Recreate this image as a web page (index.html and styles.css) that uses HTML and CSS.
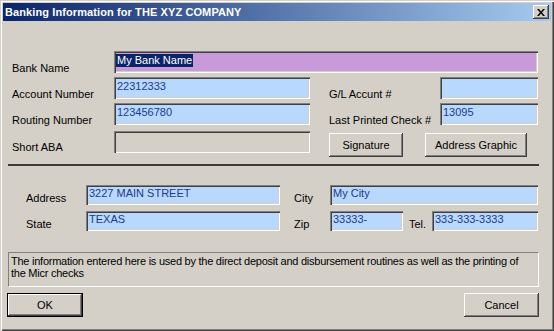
FILE: index.html
```html
<!DOCTYPE html>
<html lang="en">
<head>
  <meta charset="UTF-8" />
  <title>Banking Information</title>
  <link rel="stylesheet" href="styles.css">
</head>
<body>

  <div class="window">
    <div class="titlebar">
      <span class="title">Banking Information for THE XYZ COMPANY</span>
      <button class="close" title="Close">
        <svg width="8" height="7" viewBox="0 0 8 7"><path d="M0 0h2l2 2.5L6 0h2L5 3.5 8 7H6L4 4.5 2 7H0l3-3.5z" fill="#000"/></svg>
      </button>
    </div>

    <div class="content">
      <div class="bank-grid">
        <label class="lbl">Bank Name</label>
        <div class="field field-purple span-all"><span class="selected">My Bank Name</span></div>

        <label class="lbl">Account Number</label>
        <div class="field">22312333</div>
        <label class="lbl lbl-right">G/L Accunt #</label>
        <div class="field"></div>

        <label class="lbl">Routing Number</label>
        <div class="field">123456780</div>
        <label class="lbl lbl-right">Last Printed Check #</label>
        <div class="field">13095</div>

        <label class="lbl">Short ABA</label>
        <div class="field field-gray aba"></div>
        <div class="graphic-buttons">
          <button class="btn btn-sig">Signature</button>
          <button class="btn btn-addr">Address Graphic</button>
        </div>
      </div>

      <div class="separator"></div>

      <div class="address-grid">
        <label class="lbl">Address</label>
        <div class="field">3227 MAIN STREET</div>
        <label class="lbl lbl-mid">City</label>
        <div class="field">My City</div>

        <label class="lbl">State</label>
        <div class="field">TEXAS</div>
        <label class="lbl lbl-mid">Zip</label>
        <div class="zip-row">
          <div class="field zip">33333-</div>
          <label class="lbl tel-lbl">Tel.</label>
          <div class="field tel">333-333-3333</div>
        </div>
      </div>

      <div class="info">
        The information entered here is used by the direct deposit and disbursement routines as well as the printing of<br>
        the Micr checks
      </div>

      <div class="footer">
        <button class="btn btn-default">OK</button>
        <button class="btn btn-cancel">Cancel</button>
      </div>
    </div>
  </div>

</body>
</html>
```

FILE: styles.css
```css
body {
  margin: 0;
  font-family: 'Liberation Sans', Arial, sans-serif;
  font-size: 11px;
  color: #000;
  background: #d4d0c8;
}

.window {
  width: 554px;
  height: 331px;
  box-sizing: border-box;
  padding: 3px;
  background: #d4d0c8;
  box-shadow: inset 1px 1px #d4d0c8, inset 2px 2px #fff, inset -1px -1px #404040, inset -2px -2px #808080;
}

.titlebar {
  height: 18px;
  display: flex;
  align-items: center;
  justify-content: space-between;
  padding-left: 2px;
  background: linear-gradient(to right, #0a246a, #a6caf0);
}

.title {
  color: #fff;
  font-weight: bold;
  font-size: 11px;
  letter-spacing: 0.1px;
}

.close {
  width: 16px;
  height: 14px;
  margin-right: 2px;
  padding: 0;
  border: none;
  background: #d4d0c8;
  display: flex;
  align-items: center;
  justify-content: center;
  box-shadow: inset -1px -1px #404040, inset 1px 1px #fff, inset -2px -2px #808080;
}

.content {
  padding: 30px 12px 0 5px;
}

/* fields */
.field {
  height: 22px;
  box-sizing: border-box;
  padding: 3px 3px 0;
  background: #b9d8fd;
  color: #1c3a8c;
  white-space: nowrap;
  overflow: hidden;
  box-shadow: inset 1px 1px #808080, inset 2px 2px #404040, inset -1px -1px #fff, inset -2px -2px #d4d0c8;
}

.field-purple {
  background: #c99ad9;
  padding-left: 2px;
}

.field-gray {
  background: #d4d0c8;
}

.selected {
  background: #0a246a;
  color: #fff;
  padding: 0 1px 1px;
}

.lbl {
  align-self: end;
  line-height: 11px;
  margin-bottom: -1px;
  white-space: nowrap;
}

/* top section */
.bank-grid {
  margin-left: 4px;
  display: grid;
  grid-template-columns: 102px 196px 130px 98px;
  grid-template-rows: 22px 22px 22px 28px;
  row-gap: 4px;
}

.span-all {
  grid-column: 2 / 5;
}

.lbl-right {
  padding-left: 19px;
}

.aba {
  align-self: start;
  margin-top: 2px;
}

.bank-grid .lbl:nth-last-of-type(1) {
  margin-bottom: 4px;
}

.graphic-buttons {
  grid-column: 3 / 5;
  align-self: end;
  display: flex;
  gap: 22px;
  padding-left: 19px;
}

.btn {
  height: 24px;
  padding: 0;
  border: none;
  background: #d4d0c8;
  font-family: 'Liberation Sans', Arial, sans-serif;
  font-size: 11px;
  color: #000;
  box-shadow: inset -1px -1px #404040, inset 1px 1px #fff, inset -2px -2px #808080;
}

.btn-sig {
  width: 74px;
}

.btn-addr {
  width: 102px;
}

.separator {
  margin-top: 7px;
  height: 2px;
  background: #3c3c3c;
}

/* address section */
.address-grid {
  margin-top: 19px;
  margin-left: 18px;
  display: grid;
  grid-template-columns: 60px 194px 50px 208px;
  grid-template-rows: 20px 20px;
  row-gap: 6px;
}

.address-grid .field {
  height: 20px;
  padding-top: 2px;
}

.address-grid .lbl {
  margin-bottom: 1px;
}

.lbl-mid {
  padding-left: 14px;
}

.zip-row {
  display: flex;
}

.zip {
  width: 73px;
}

.tel-lbl {
  width: 23px;
  margin-left: 6px;
}

.tel {
  flex: 1;
}

/* info + footer */
.info {
  margin-top: 21px;
  height: 35px;
  box-sizing: border-box;
  padding: 2px 2px 0;
  line-height: 12px;
  letter-spacing: -0.25px;
  white-space: nowrap;
  overflow: hidden;
  border-top: 1px solid #808080;
  border-left: 1px solid #808080;
  border-bottom: 1px solid #fff;
  border-right: 1px solid #fff;
}

.footer {
  margin-top: 6px;
  display: flex;
  justify-content: space-between;
}

.btn-default {
  width: 76px;
  margin-left: -1px;
  border: 1px solid #000;
  box-sizing: border-box;
}

.btn-cancel {
  width: 75px;
}
```
